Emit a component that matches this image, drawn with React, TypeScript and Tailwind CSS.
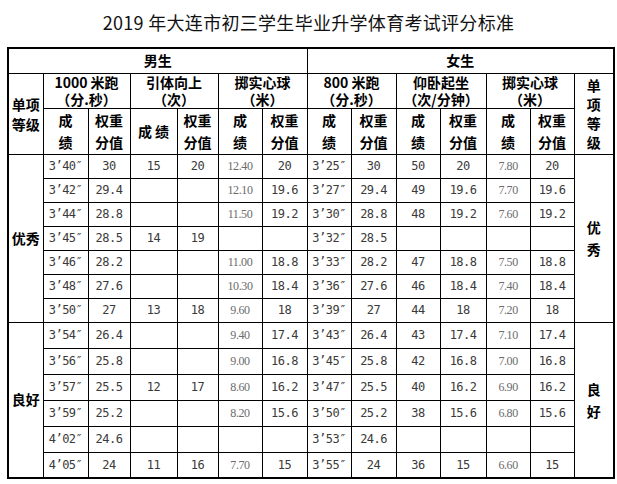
type Row = string[];

const boysTop: Row[] = [
  ["3’40″", "30", "15", "20", "12.40", "20"],
  ["3’42″", "29.4", "", "", "12.10", "19.6"],
  ["3’44″", "28.8", "", "", "11.50", "19.2"],
  ["3’45″", "28.5", "14", "19", "", ""],
  ["3’46″", "28.2", "", "", "11.00", "18.8"],
  ["3’48″", "27.6", "", "", "10.30", "18.4"],
  ["3’50″", "27", "13", "18", "9.60", "18"],
];
const boysGood: Row[] = [
  ["3’54″", "26.4", "", "", "9.40", "17.4"],
  ["3’56″", "25.8", "", "", "9.00", "16.8"],
  ["3’57″", "25.5", "12", "17", "8.60", "16.2"],
  ["3’59″", "25.2", "", "", "8.20", "15.6"],
  ["4’02″", "24.6", "", "", "", ""],
  ["4’05″", "24", "11", "16", "7.70", "15"],
];
const girlsTop: Row[] = [
  ["3’25″", "30", "50", "20", "7.80", "20"],
  ["3’27″", "29.4", "49", "19.6", "7.70", "19.6"],
  ["3’30″", "28.8", "48", "19.2", "7.60", "19.2"],
  ["3’32″", "28.5", "", "", "", ""],
  ["3’33″", "28.2", "47", "18.8", "7.50", "18.8"],
  ["3’36″", "27.6", "46", "18.4", "7.40", "18.4"],
  ["3’39″", "27", "44", "18", "7.20", "18"],
];
const girlsGood: Row[] = [
  ["3’43″", "26.4", "43", "17.4", "7.10", "17.4"],
  ["3’45″", "25.8", "42", "16.8", "7.00", "16.8"],
  ["3’47″", "25.5", "40", "16.2", "6.90", "16.2"],
  ["3’50″", "25.2", "38", "15.6", "6.80", "15.6"],
  ["3’53″", "24.6", "", "", "", ""],
  ["3’55″", "24", "36", "15", "6.60", "15"],
];

const widths = [35, 45, 42, 47, 41, 44, 45, 44, 45, 44, 46, 44, 44, 40];

const cjk = { fontFamily: '"Noto Sans CJK SC", "Noto Sans", sans-serif' };
const mono = { fontFamily: '"DejaVu Sans Mono", "Liberation Mono", monospace' };
const serif = { fontFamily: '"Liberation Serif", "DejaVu Serif", serif' };

function Cells({ row }: { row: Row }) {
  return (
    <>
      {row.map((v, i) => (
        <td
          key={i}
          className={
            i === 4
              ? "border border-black text-center text-[12px] tracking-[-0.4px] text-[#6b6b6b]"
              : "border border-black text-center text-[12px] tracking-[-0.5px] text-[#3a3a3a]"
          }
          style={i === 4 ? serif : mono}
        >
          {v}
        </td>
      ))}
    </>
  );
}

function Group({ label, boys, girls, h }: { label: string; boys: Row[]; girls: Row[]; h: string }) {
  return (
    <>
      {boys.map((b, i) => (
        <tr key={i} className={h}>
          {i === 0 && (
            <td rowSpan={boys.length} className="border border-black text-center font-bold text-[14px]" style={cjk}>
              {label}
            </td>
          )}
          <Cells row={b} />
          <Cells row={girls[i]} />
          {i === 0 && (
            <td rowSpan={boys.length} className="border border-black text-center font-bold text-[14px] leading-[22px]" style={cjk}>
              {label[0]}
              <br />
              {label[1]}
            </td>
          )}
        </tr>
      ))}
    </>
  );
}

function Event({ name, unit }: { name: string; unit: string }) {
  return (
    <th colSpan={2} className="border border-black font-bold text-[14px] leading-[17px] text-center">
      {name}
      <br />
      {unit}
    </th>
  );
}

function SubHead({ joined }: { joined?: boolean }) {
  return (
    <>
      <th className="border border-black font-bold text-[14px] leading-[22px] text-center">
        {joined ? "成 绩" : <>成<br />绩</>}
      </th>
      <th className="border border-black font-bold text-[14px] leading-[22px] text-center">
        权重
        <br />
        分值
      </th>
    </>
  );
}

export default function App() {
  return (
    <div className="w-[617px] h-[484px] bg-white text-black overflow-hidden" style={cjk}>
      <div className="h-[47px] flex items-center justify-center pb-[2px]">
        <h1 className="text-[18px] font-normal tracking-[0.3px] text-[#111]">2019 年大连市初三学生毕业升学体育考试评分标准</h1>
      </div>
      <table className="ml-[7px] w-[606px] table-fixed border-collapse border-2 border-black" style={cjk}>
        <colgroup>
          {widths.map((w, i) => (
            <col key={i} style={{ width: w }} />
          ))}
        </colgroup>
        <thead>
          <tr className="h-[25px]">
            <th colSpan={7} className="border border-black font-bold text-[14px] text-center">男生</th>
            <th colSpan={7} className="border border-black font-bold text-[14px] text-center">女生</th>
          </tr>
          <tr className="h-[35px]">
            <th rowSpan={2} className="border border-black font-bold text-[14px] leading-[20px] text-center">
              单项
              <br />
              等级
            </th>
            <Event name="1000 米跑" unit="（分.秒）" />
            <Event name="引体向上" unit="（次）" />
            <Event name="掷实心球" unit="（米）" />
            <Event name="800 米跑" unit="（分.秒）" />
            <Event name="仰卧起坐" unit="（次/分钟）" />
            <Event name="掷实心球" unit="（米）" />
            <th rowSpan={2} className="border border-black font-bold text-[14px] leading-[19px] text-center">
              单<br />项<br />等<br />级
            </th>
          </tr>
          <tr className="h-[46px]">
            <SubHead />
            <SubHead joined />
            <SubHead />
            <SubHead />
            <SubHead />
            <SubHead />
          </tr>
        </thead>
        <tbody>
          <Group label="优秀" boys={boysTop} girls={girlsTop} h="h-[24px]" />
          <Group label="良好" boys={boysGood} girls={girlsGood} h="h-[26px]" />
        </tbody>
      </table>
    </div>
  );
}
